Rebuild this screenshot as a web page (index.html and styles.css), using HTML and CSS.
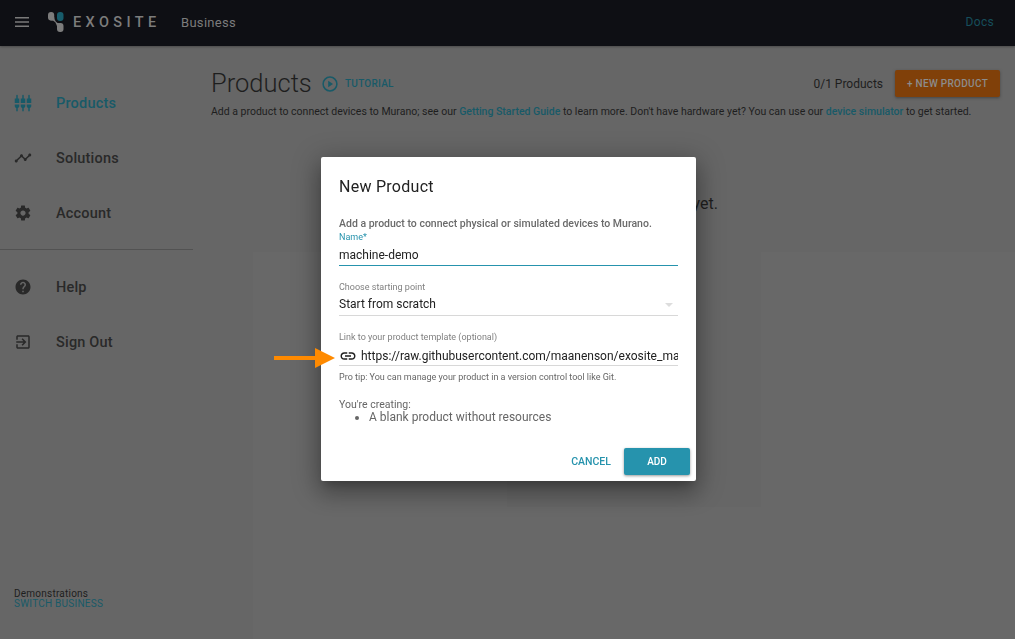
FILE: index.html
```html
<!DOCTYPE html>
<html lang="en">
<head>
<meta charset="utf-8">
<title>Products</title>
<link rel="stylesheet" href="styles.css">
</head>
<body>
<header class="topbar">
  <svg class="menu-icon" viewBox="0 0 14 10"><path d="M0 .8h14M0 5h14M0 9.2h14"/></svg>
  <svg class="logo" viewBox="0 0 16 20">
    <rect class="logo-light" x="0" y="0" width="6.2" height="8.600" rx="3"/>
    <rect class="logo-teal" x="9" y="0" width="6.5" height="9" rx="3"/>
    <rect class="logo-light" x="9" y="11" width="6.5" height="9" rx="3"/>
    <path class="logo-light" d="M2 8.300Q5.500 8.200 7.300 10.300Q8.500 12.500 9.200 15L12 11.300Q9.500 11.500 8 9.700Q6.500 8 6.100 5Z"/>
  </svg>
  <span class="brand">EXOSITE</span>
  <span class="section">Business</span>
  <a class="docs">Docs</a>
</header>
<div class="page">
  <aside class="sidebar">
    <nav class="nav">
      <a class="item active"><svg class="ico" viewBox="0 0 24 24"><path d="M5 2c0-.55-.45-1-1-1s-1 .45-1 1v4H1v6h6V6H5V2zm4 14c0 1.300.840 2.400 2 2.820V23h2v-4.180c1.160-.410 2-1.510 2-2.820v-2H9v2zm-8 0c0 1.300.840 2.400 2 2.820V23h2v-4.180C6.160 18.400 7 17.300 7 16v-2H1v2zM21 6V2c0-.55-.45-1-1-1s-1 .45-1 1v4h-2v6h6V6h-2zm-8-4c0-.55-.45-1-1-1s-1 .45-1 1v4H9v6h6V6h-2V2zm4 14c0 1.300.840 2.400 2 2.820V23h2v-4.180c1.160-.410 2-1.510 2-2.820v-2h-6v2z"/></svg><span>Products</span></a>
      <a class="item"><svg class="ico" viewBox="0 0 24 24"><path d="M23 8c0 1.100-.9 2-2 2-.18 0-.35-.02-.51-.07l-3.560 3.550c.05.160.070.340.070.520 0 1.100-.9 2-2 2s-2-.9-2-2c0-.18.020-.36.070-.52l-2.550-2.550c-.16.050-.34.070-.52.070s-.36-.02-.52-.07l-4.550 4.560c.05.160.070.330.070.510 0 1.100-.9 2-2 2s-2-.9-2-2 .9-2 2-2c.18 0 .350.020.510.070l4.560-4.550C8.020 9.360 8 9.180 8 9c0-1.100.9-2 2-2s2 .9 2 2c0 .18-.02.360-.07.520l2.550 2.550c.16-.05.340-.07.520-.07s.36.020.520.070l3.550-3.560C19.020 8.350 19 8.180 19 8c0-1.100.9-2 2-2s2 .9 2 2z"/></svg><span>Solutions</span></a>
      <a class="item"><svg class="ico" viewBox="0 0 24 24"><path d="M19.430 12.980c.04-.32.070-.64.070-.98s-.03-.66-.07-.98l2.110-1.650c.19-.15.240-.42.120-.64l-2-3.460c-.12-.22-.39-.3-.61-.22l-2.490 1c-.52-.4-1.080-.73-1.690-.98l-.38-2.650C14.460 2.180 14.250 2 14 2h-4c-.25 0-.46.180-.49.420l-.38 2.650c-.61.250-1.170.590-1.690.98l-2.490-1c-.23-.09-.49 0-.61.220l-2 3.460c-.13.220-.07.490.120.640l2.110 1.650c-.04.320-.07.650-.07.980s.03.660.070.980l-2.110 1.650c-.19.150-.24.420-.12.640l2 3.460c.12.220.390.300.610.220l2.490-1c.52.400 1.080.730 1.690.980l.38 2.650c.03.240.240.420.490.420h4c.25 0 .46-.18.490-.42l.38-2.650c.61-.25 1.170-.59 1.690-.98l2.490 1c.23.090.490 0 .610-.22l2-3.460c.12-.22.070-.49-.12-.64l-2.110-1.650zM12 15.500c-1.930 0-3.500-1.570-3.500-3.500s1.570-3.500 3.500-3.500 3.500 1.570 3.500 3.500-1.570 3.500-3.500 3.500z"/></svg><span>Account</span></a>
    </nav>
    <nav class="nav second">
      <a class="item"><svg class="ico" viewBox="0 0 24 24"><path d="M12 2C6.480 2 2 6.480 2 12s4.480 10 10 10 10-4.480 10-10S17.520 2 12 2zm1 17h-2v-2h2v2zm2.070-7.750l-.9.920C13.450 12.900 13 13.500 13 15h-2v-.5c0-1.100.450-2.100 1.170-2.830l1.240-1.260c.37-.36.590-.86.590-1.410 0-1.100-.9-2-2-2s-2 .9-2 2H8c0-2.210 1.790-4 4-4s4 1.790 4 4c0 .88-.36 1.680-.93 2.250z"/></svg><span>Help</span></a>
      <a class="item"><svg class="ico" viewBox="0 0 24 24"><path d="M10.090 15.590L11.500 17l5-5-5-5-1.410 1.410L12.670 11H3v2h9.670l-2.580 2.590zM19 3H5c-1.110 0-2 .9-2 2v4h2V5h14v14H5v-4H3v4c0 1.100.89 2 2 2h14c1.100 0 2-.9 2-2V5c0-1.100-.9-2-2-2z"/></svg><span>Sign Out</span></a>
    </nav>
    <div class="account"><span>Demonstrations</span><a>SWITCH BUSINESS</a></div>
  </aside>
  <main class="content">
    <div class="heading">
      <h1>Products</h1>
      <svg class="play" viewBox="0 0 16 16"><circle cx="8" cy="8" r="6.900"/><path d="M6.200 4.800v6.400L11 8z"/></svg>
      <a class="tutorial">TUTORIAL</a>
      <span class="count">0/1 Products</span>
      <button class="new-btn">+ NEW PRODUCT</button>
    </div>
    <p class="intro">Add a product to connect devices to Murano; see our <a>Getting Started Guide</a> to learn more. Don't have hardware yet? You can use our <a>device simulator</a> to get started.</p>
    <p class="empty">You don't have any products yet.</p>
  </main>
</div>
<div class="overlay">
  <section class="dialog">
    <h2>New Product</h2>
    <p class="lead">Add a product to connect physical or simulated devices to Murano.</p>
    <label class="label focus">Name*</label>
    <div class="field name">machine-demo</div>
    <label class="label start">Choose starting point</label>
    <div class="field select"><span>Start from scratch</span><i class="caret"></i></div>
    <label class="label link">Link to your product template (optional)</label>
    <div class="field url"><svg class="chain" viewBox="0 0 24 24"><path d="M3.900 12c0-1.710 1.390-3.100 3.100-3.100h4V7H7c-2.760 0-5 2.240-5 5s2.240 5 5 5h4v-1.900H7c-1.710 0-3.100-1.390-3.100-3.100zM8 13h8v-2H8v2zm9-6h-4v1.900h4c1.710 0 3.100 1.390 3.100 3.100s-1.390 3.100-3.100 3.100h-4V17h4c2.760 0 5-2.240 5-5s-2.240-5-5-5z"/></svg><span class="url-text">https://raw.githubusercontent.com/maanenson/exosite_ma</span></div>
    <p class="tip">Pro tip: You can manage your product in a version control tool like Git.</p>
    <p class="creating">You're creating:</p>
    <ul class="list"><li>A blank product without resources</li></ul>
    <div class="actions"><button class="cancel">CANCEL</button><button class="add">ADD</button></div>
    <svg class="arrow" viewBox="0 0 61 20"><path d="M0 8h41V0l20 10-20 10v-8H0z"/></svg>
  </section>
</div>
</body>
</html>
```
FILE: styles.css
```css
* { box-sizing: border-box; }
body { margin: 0; width: 1015px; height: 639px; overflow: hidden; background: linear-gradient(#666, #666) 507px 252px / 254px 255px no-repeat, linear-gradient(#686868, #686868) 253px 252px / 762px 387px no-repeat #666; color: #1e1e1e; font-family: Roboto, sans-serif; display: flex; flex-direction: column; }
h1, h2, p, ul { margin: 0; padding: 0; font-weight: 400; }
button { border: 0; font: 500 10px/27px Roboto, sans-serif; padding: 0; }
svg { flex: none; display: block; }
.topbar { height: 46px; flex: none; background: #0e0f14; display: flex; align-items: center; padding: 0 22px 2px 15px; color: #7c7c7c; box-shadow: 0 1px 2px #4a4a4a; }
.menu-icon { width: 14px; height: 10px; stroke: #7a7a7a; stroke-width: 1.5; }
.logo { width: 16px; height: 20px; margin-left: 19px; }
.logo-light { fill: #7c7c7c; }
.logo-teal { fill: #175c6b; }
.brand { font-size: 14.5px; font-weight: 500; letter-spacing: 4.4px; margin-left: 9px; width: 108px; }
.section { font-size: 13px; letter-spacing: .3px; }
.docs { margin-left: auto; font-size: 12px; letter-spacing: .3px; margin-right: -1px; color: #164e5b; }
.page { display: flex; flex: 1; min-height: 0; }
.sidebar { width: 193px; display: flex; flex-direction: column; padding-top: 29px; }
.nav { border-bottom: 1px solid #525252; padding-bottom: 9px; }
.nav.second { border: 0; padding-top: 9px; }
.item { display: flex; align-items: center; height: 55px; padding-left: 14px; gap: 24px; font-size: 14.5px; font-weight: 500; letter-spacing: .2px; color: #292929; }
.item span { padding-top: 2px; }
.item.active { color: #185a68; }
.ico { width: 18px; height: 18px; fill: currentColor; }
.account { margin-top: auto; padding: 0 0 30px 14px; font-size: 10px; line-height: 10px; display: flex; flex-direction: column; letter-spacing: .23px; }
.account a { color: #185a68; letter-spacing: .25px; }
.content { flex: 1; padding: 24px 15px 0 18px; }
.heading { display: flex; align-items: center; height: 27px; }
h1 { font-size: 25.5px; font-weight: 300; width: 111px; padding-bottom: 2px; }
.play { width: 16px; height: 16px; fill: #185a68; }
.play circle { fill: none; stroke: #185a68; stroke-width: 1.5; }
.tutorial { font-size: 10px; font-weight: 500; letter-spacing: .25px; margin-left: 7px; color: #185a68; }
.count { margin-left: auto; font-size: 12px; }
.new-btn { width: 105px; height: 27px; margin-left: 12px; background: #804009; color: #8c8c8c; letter-spacing: .3px; border-radius: 2px; box-shadow: 0 1px 3px #444; }
.intro { font-size: 10.5px; line-height: 14px; margin-top: 8px; white-space: nowrap; }
.intro a { color: #185a68; font-weight: 500; }
.empty { font-size: 16px; line-height: 20px; text-align: right; margin: 75px 282px 0 0; }
.overlay { position: fixed; inset: 0; display: flex; align-items: flex-start; padding: 157px 0 0 321px; }
.dialog { position: relative; width: 375px; height: 324px; background: #fff; border-radius: 2px; padding: 20px 18px 0; box-shadow: 0 7px 9px -4px rgba(0,0,0,.2), 0 14px 21px 2px rgba(0,0,0,.14), 0 5px 26px 4px rgba(0,0,0,.25); }
h2 { font-size: 16px; line-height: 20px; color: #222; letter-spacing: .27px; }
.lead { font-size: 10.5px; font-weight: 500; line-height: 14px; color: #6a6a6a; margin-top: 20px; white-space: nowrap; }
.label { display: block; font-size: 9px; line-height: 12px; color: #808080; }
.label.focus { color: #2693ad; }
.field { height: 23px; border-bottom: 1px solid #d8d8d8; font-size: 12px; line-height: 24px; color: #212121; }
.field.name { border-color: #2693ad; }
.label.start { margin-top: 15px; }
.select { display: flex; justify-content: space-between; align-items: center; padding-right: 5px; line-height: 22px; }
.caret { border: 4px solid transparent; border-top-color: #ddd; border-bottom: 0; position: relative; top: 1px; }
.label.link { margin-top: 15px; }
.url { display: flex; align-items: center; padding-top: 4px; line-height: 18px; }
.chain { width: 18px; height: 18px; fill: #212121; margin-right: 4px; }
.url-text { white-space: nowrap; flex: 1; min-width: 0; overflow: hidden; }
.tip { font-size: 9px; line-height: 12px; color: #666; margin-top: 5px; white-space: nowrap; }
.creating { font-size: 10.5px; line-height: 14px; color: #666; margin-top: 15px; }
.list { font-size: 12px; line-height: 14px; color: #666; padding-left: 30px; margin-top: -2px; }
.actions { position: absolute; right: 6px; bottom: 6px; display: flex; }
.cancel { width: 66px; background: none; color: #2693ad; font-size: 10.5px; }
.add { width: 66px; background: #2693ad; color: #fff; border-radius: 2px; box-shadow: 0 1px 3px rgba(0,0,0,.4); }
.arrow { position: absolute; left: -47px; top: 191px; width: 61px; height: 20px; fill: #ff8a00; }
```
